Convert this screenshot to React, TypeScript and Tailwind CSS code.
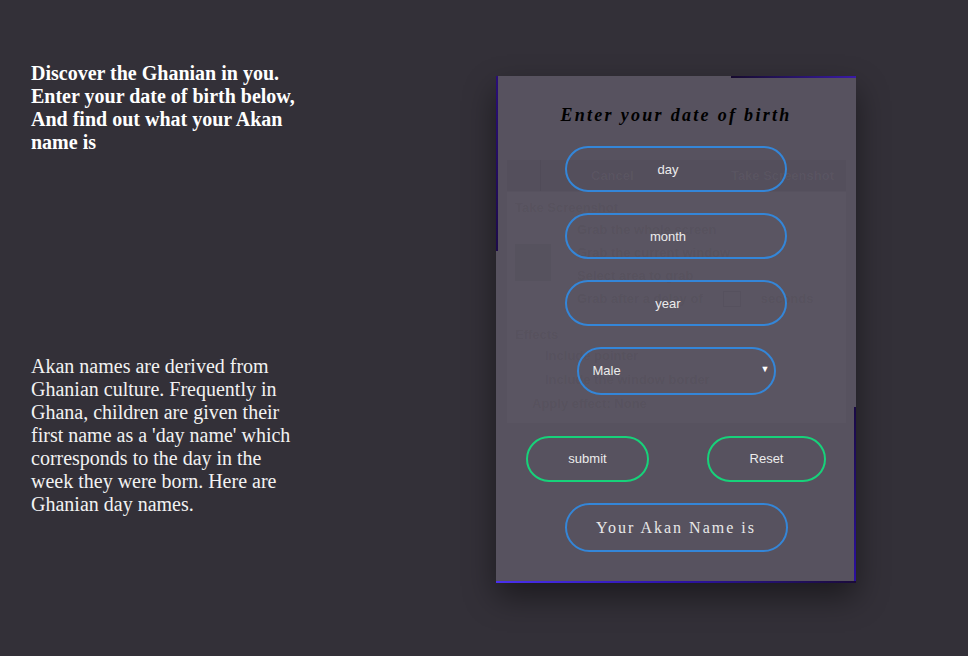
import { useState } from 'react';

const serif = { fontFamily: '"Liberation Serif", "Times New Roman", serif' };
const sans = { fontFamily: '"Liberation Sans", Arial, sans-serif' };

// faint screenshot-dialog picture sitting behind the form
function BackdropPicture() {
    return (
        <div className="absolute left-[11px] top-[84px] w-[339px] pointer-events-none font-bold text-[13px] leading-[16px]" style={sans}>
            <div className="h-[31px] bg-black/[0.03] flex items-center text-white/[0.04]">
                <span className="w-[34px] h-[31px] border-r border-black/[0.04]" />
                <span className="ml-[50px]">Cancel</span>
                <span className="ml-auto mr-[12px]">Take Screenshot</span>
            </div>
            <div className="h-[231px] bg-white/[0.02] mt-[1px] px-[8px] pt-[8px] flex flex-col text-black/[0.055]">
                <div>Take Screenshot</div>
                <div className="flex gap-[18px] mt-[6px]">
                    <div className="w-[36px] h-[37px] mt-[22px] bg-black/[0.035]" />
                    <div className="flex flex-col gap-[7px] pl-[8px]">
                        <span>Grab the whole screen</span>
                        <span>Grab the current window</span>
                        <span>Select area to grab</span>
                        <span className="flex gap-[20px]">
                            Grab after a delay of
                            <span className="w-[18px] h-[16px] border border-black/[0.04]" />
                            seconds
                        </span>
                    </div>
                </div>
                <div className="mt-[20px]">Effects</div>
                <div className="flex flex-col gap-[8px] mt-[5px] pl-[30px]">
                    <span>Include pointer</span>
                    <span>Include the window border</span>
                    <span className="-ml-[13px]">Apply effect: None</span>
                </div>
            </div>
        </div>
    );
}

export default function App() {
    const [day, setDay] = useState('');
    const [month, setMonth] = useState('');
    const [year, setYear] = useState('');
    const [gender, setGender] = useState('Male');

    const field =
        'w-[222px] h-[46px] rounded-full border-2 border-[#3486d8] bg-transparent text-center pr-[16px] text-[13px] text-[#ececec] placeholder:text-[#ececec] outline-none';

    return (
        <div className="min-h-screen w-full bg-[#333038] flex items-start">
            {/* Intro */}
            <div className="ml-[31px] w-[270px] text-white" style={serif}>
                <h3 className="mt-[62px] text-[20px] leading-[23px] font-bold">
                    Discover the Ghanian in you. Enter your date of birth below, And find out what your Akan name is
                </h3>
                <p className="mt-[201px] text-[20px] leading-[23px] text-[#f2f2f2]">
                    Akan names are derived from Ghanian culture. Frequently in Ghana, children are given their first name as a 'day name' which corresponds to the day in the week they were born. Here are Ghanian day names.
                </p>
            </div>

            {/* Form card */}
            <div className="relative ml-[195px] mt-[76px] w-[360px] bg-[#57525f] shadow-[0_14px_30px_rgba(0,0,0,0.45)] flex flex-col items-center pb-[31px]">
                <BackdropPicture />

                {/* animated border, frozen */}
                <span className="absolute top-0 left-[235px] right-0 h-[2px] bg-gradient-to-r from-[#160a2e] to-[#3a1aa8]" />
                <span className="absolute left-0 top-0 w-[2px] h-[175px] bg-gradient-to-b from-[#2a0e78] to-[#1d0a4a]" />
                <span className="absolute right-0 top-[331px] w-[2px] h-[176px] bg-gradient-to-b from-[#1a0a44] to-[#2c10a0]" />
                <span className="absolute left-0 right-0 bottom-0 h-[2px] bg-gradient-to-r from-[#4a30f0] via-[#2d12a8] to-[#1a0a3a]" />

                <h2 className="relative mt-[27px] text-[18px] leading-[24px] italic font-bold tracking-[2.3px] text-black" style={serif}>
                    Enter your date of birth
                </h2>

                <div className="relative mt-[19px] flex flex-col items-center gap-[21px]" style={sans}>
                    <input className={field} placeholder="day" value={day} onChange={(e) => setDay(e.target.value)} />
                    <input className={field} placeholder="month" value={month} onChange={(e) => setMonth(e.target.value)} />
                    <input className={field} placeholder="year" value={year} onChange={(e) => setYear(e.target.value)} />
                    <div className="relative w-[199px] h-[48px]">
                        <select
                            value={gender}
                            onChange={(e) => setGender(e.target.value)}
                            className="appearance-none w-full h-full rounded-full border-2 border-[#3486d8] bg-transparent pl-[14px] text-[13px] text-[#ececec] outline-none"
                        >
                            <option className="text-black">Male</option>
                            <option className="text-black">Female</option>
                        </select>
                        <span className="absolute right-[6px] top-[16px] text-[9px] text-white pointer-events-none">▼</span>
                    </div>
                </div>

                <div className="relative mt-[41px] w-full flex justify-between pl-[30px] pr-[30px]" style={sans}>
                    <button className="w-[123px] h-[46px] rounded-full border-2 border-[#17d27a] text-[13px] text-[#ececec]">
                        submit
                    </button>
                    <button className="w-[119px] h-[46px] rounded-full border-2 border-[#17d27a] text-[13px] text-[#ececec]">
                        Reset
                    </button>
                </div>

                <div
                    className="relative mt-[21px] w-[223px] h-[49px] rounded-full border-2 border-[#3486d8] flex items-center justify-center text-[16px] tracking-[2px] text-[#e8e8e8]"
                    style={serif}
                >
                    Your Akan Name is
                </div>
            </div>
        </div>
    );
}
